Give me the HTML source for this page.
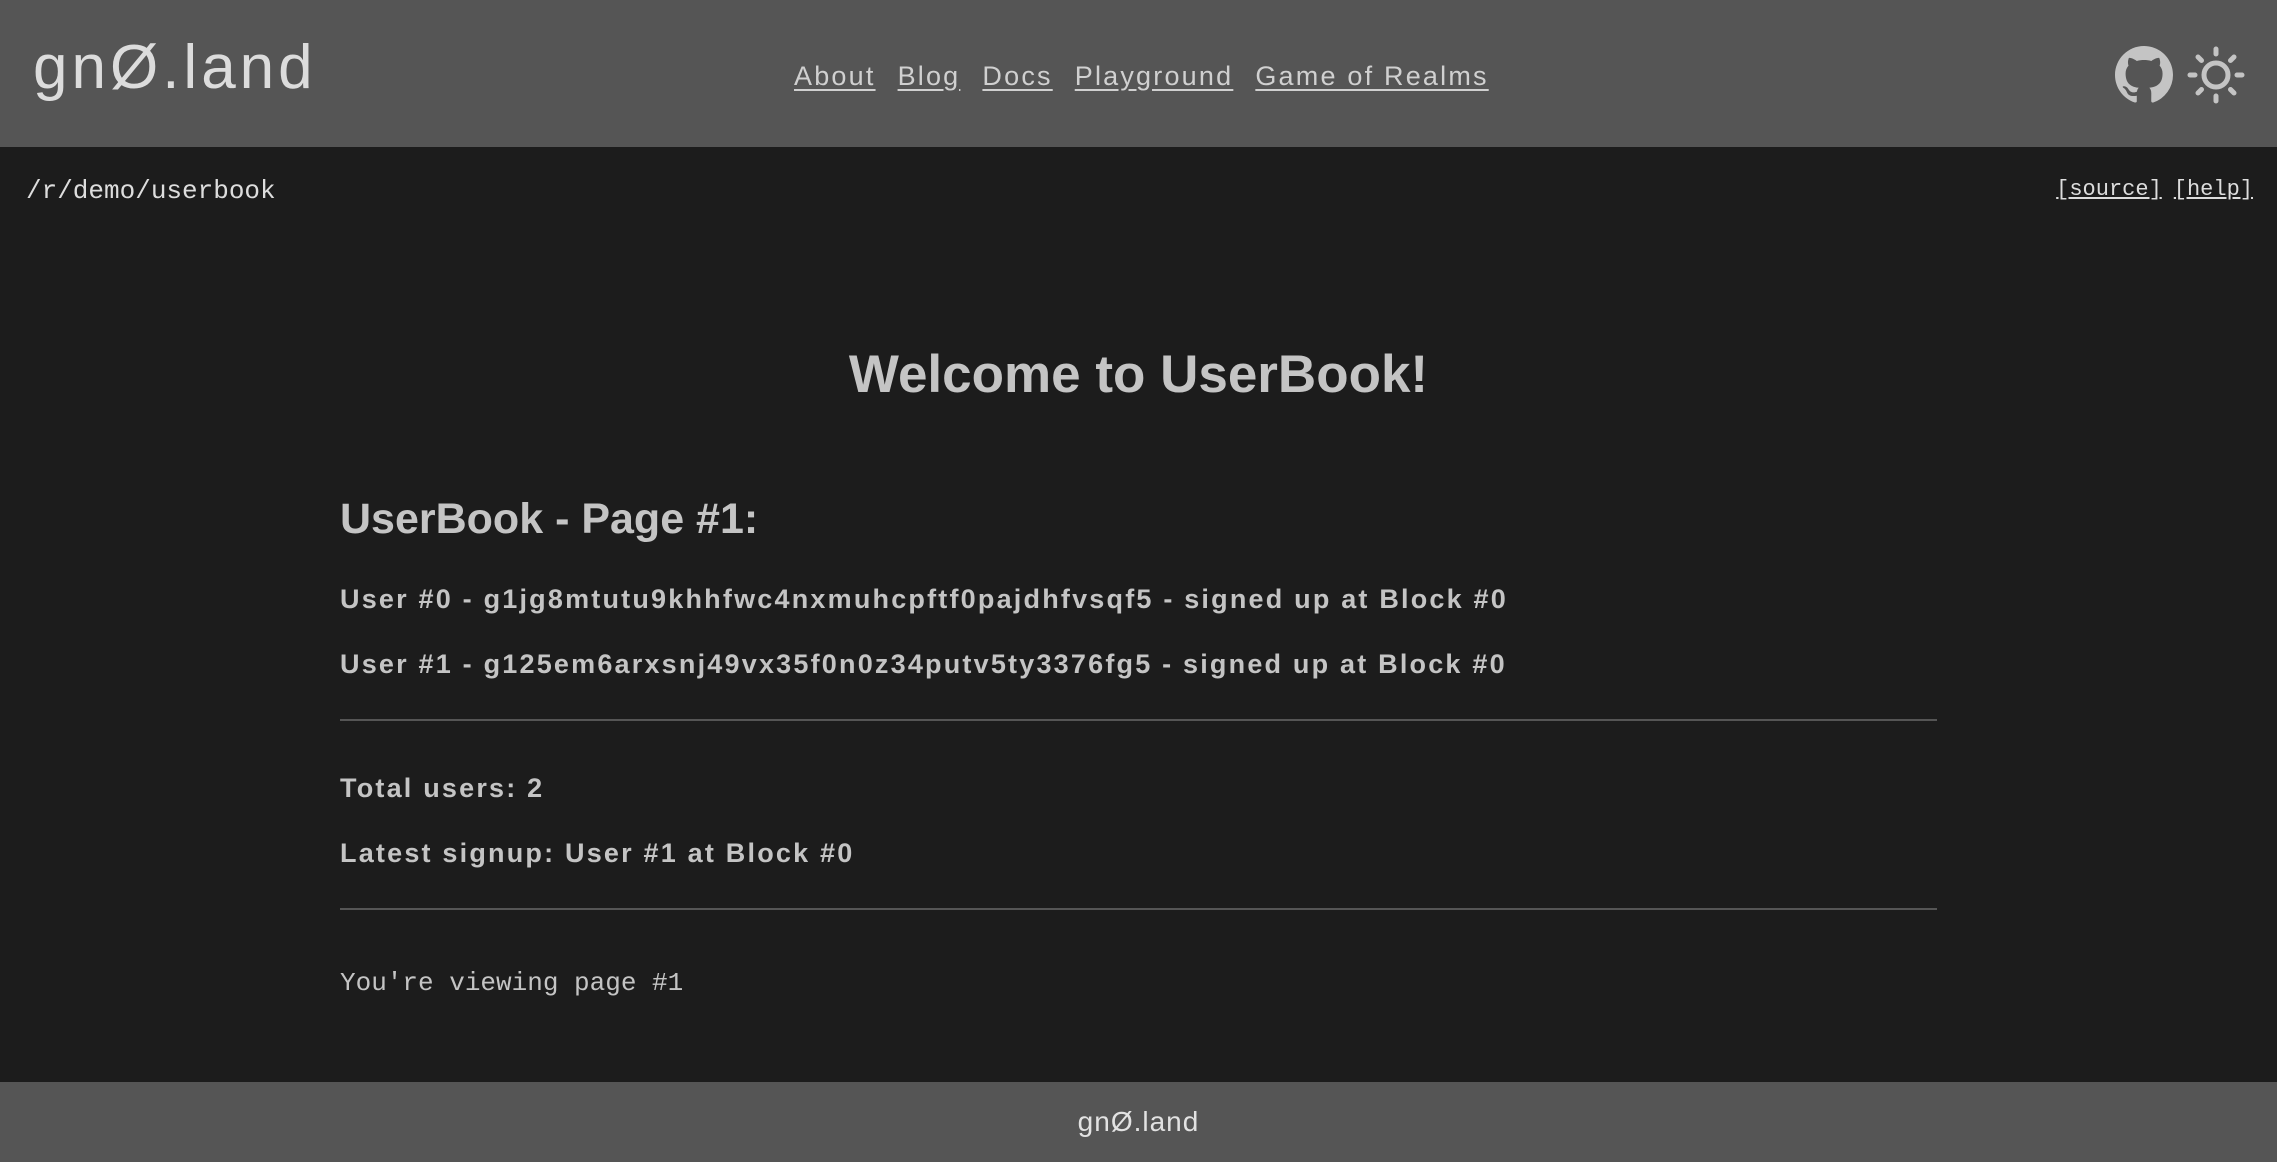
<!DOCTYPE html>
<html><head><meta charset="utf-8"><style>
html,body{margin:0;padding:0;width:2277px;height:1162px;background:#1c1c1c;overflow:hidden;color:#c4c4c4;font-family:"Liberation Sans",sans-serif}
header{position:absolute;left:0;top:0;width:2277px;height:147px;background:#555}
.logo{position:absolute;left:33px;top:32px;font-size:62px;color:#dcdcdc;letter-spacing:4px}
nav{position:absolute;left:794px;top:61px;font-size:27px;letter-spacing:2.2px}
nav a{color:#d0d0d0;text-decoration:underline;margin-right:22px;text-underline-offset:4px}
.path{position:absolute;left:26px;top:176px;font-family:"Liberation Mono",monospace;font-size:26px;color:#ddd}
.links{position:absolute;right:24px;top:177px;font-family:"Liberation Mono",monospace;font-size:22px;color:#ddd}
.links a{color:#ddd;text-decoration:underline;margin-left:12px}
h1{position:absolute;left:0;width:2277px;text-align:center;top:344px;margin:0;font-size:53px;font-weight:bold;color:#c4c4c4}
.c{position:absolute;left:340px;width:1597px}
h2{margin:0;font-size:43px;font-weight:bold}
.u{font-size:27px;font-weight:bold;letter-spacing:2.2px;margin:0}
.hr{height:2px;background:#555}
.mono{font-family:"Liberation Mono",monospace;font-size:26px}
footer{position:absolute;left:0;top:1082px;width:2277px;height:80px;background:#555;text-align:center}
footer span{display:inline-block;margin-top:24px;font-size:28px;color:#e2e2e2;letter-spacing:1px}
</style></head><body>
<header>
<div class="logo">gnØ.land</div>
<nav><a>About</a><a>Blog</a><a>Docs</a><a>Playground</a><a>Game of Realms</a></nav>
<svg style="position:absolute;left:2115px;top:46px" width="58" height="58" viewBox="0 0 16 16"><path fill="#c4c4c4" d="M8 0C3.58 0 0 3.58 0 8c0 3.54 2.290 6.530 5.470 7.590.4.07.55-.17.55-.38 0-.19-.01-.82-.01-1.49-2.01.37-2.53-.49-2.69-.94-.09-.23-.48-.94-.82-1.13-.28-.15-.68-.52-.01-.53.63-.01 1.08.58 1.23.82.72 1.21 1.87.87 2.33.66.07-.52.28-.87.51-1.07-1.78-.2-3.64-.89-3.64-3.95 0-.87.31-1.59.82-2.15-.08-.2-.36-1.02.08-2.12 0 0 .67-.21 2.2.82.64-.18 1.32-.27 2-.27.68 0 1.36.09 2 .27 1.53-1.04 2.2-.82 2.2-.82.44 1.1.16 1.92.08 2.12.51.56.82 1.27.82 2.15 0 3.07-1.87 3.75-3.65 3.95.29.25.54.73.54 1.48 0 1.07-.01 1.93-.01 2.2 0 .21.15.46.55.38A8.013 8.013 0 0016 8c0-4.42-3.58-8-8-8z"/></svg>
<svg style="position:absolute;left:2186px;top:45px" width="60" height="60" viewBox="0 0 60 60" stroke="#c4c4c4" stroke-width="5" stroke-linecap="round" fill="none"><circle cx="30" cy="30" r="12"/><path d="M30 4v5M30 51v5M4 30h5M51 30h5M12 12l3.5 3.5M44.5 44.5L48 48M12 48l3.5-3.5M44.5 15.5L48 12"/></svg>
</header>
<div class="path">/r/demo/userbook</div>
<div class="links"><a>[source]</a><a>[help]</a></div>
<h1>Welcome to UserBook!</h1>
<div class="c" style="top:495px"><h2>UserBook - Page #1:</h2></div>
<div class="c u" style="top:584px">User #0 - g1jg8mtutu9khhfwc4nxmuhcpftf0pajdhfvsqf5 - signed up at Block #0</div>
<div class="c u" style="top:649px">User #1 - g125em6arxsnj49vx35f0n0z34putv5ty3376fg5 - signed up at Block #0</div>
<div class="c hr" style="top:719px"></div>
<div class="c u" style="top:773px">Total users: 2</div>
<div class="c u" style="top:838px">Latest signup: User #1 at Block #0</div>
<div class="c hr" style="top:908px"></div>
<div class="c mono" style="top:968px">You're viewing page #1</div>
<footer><span>gnØ.land</span></footer>
</body></html>
